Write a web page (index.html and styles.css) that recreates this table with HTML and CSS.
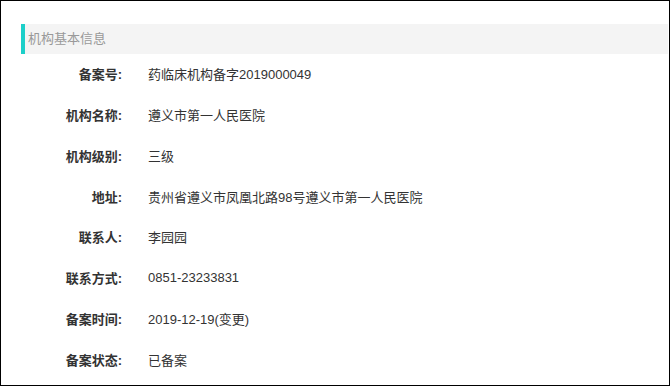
FILE: index.html
```html
<!DOCTYPE html>
<html lang="zh-CN">
<head>
<meta charset="utf-8">
<title>机构基本信息</title>
<link rel="stylesheet" href="styles.css">
</head>
<body>
<div class="frame">
  <div class="panel">
    <div class="title">机构基本信息</div>
    <div class="rows">
      <div class="row"><span class="label">备案号:</span><span class="value">药临床机构备字2019000049</span></div>
      <div class="row"><span class="label">机构名称:</span><span class="value">遵义市第一人民医院</span></div>
      <div class="row"><span class="label">机构级别:</span><span class="value">三级</span></div>
      <div class="row"><span class="label">地址:</span><span class="value">贵州省遵义市凤凰北路98号遵义市第一人民医院</span></div>
      <div class="row"><span class="label">联系人:</span><span class="value">李园园</span></div>
      <div class="row"><span class="label">联系方式:</span><span class="value">0851-23233831</span></div>
      <div class="row"><span class="label">备案时间:</span><span class="value">2019-12-19(变更)</span></div>
      <div class="row"><span class="label">备案状态:</span><span class="value">已备案</span></div>
    </div>
  </div>
</div>
</body>
</html>
```
FILE: styles.css
```css
* { box-sizing: border-box; }
html, body { margin: 0; padding: 0; background: #fff; }
body {
  font-family: "Liberation Sans", "Noto Sans CJK SC", sans-serif;
  font-size: 13px;
  color: #333;
}
.frame {
  width: 670px;
  height: 386px;
  border: 1px solid #000;
  padding: 23px 1px 0 20px;
  overflow: hidden;
}
.title {
  height: 30px;
  line-height: 30px;
  background: #f4f4f4;
  border-left: 4px solid #1ccfc9;
  padding-left: 3px;
  color: #999;
}
.rows {
  display: flex;
  flex-direction: column;
  margin-top: -0.6px;
}
.row {
  display: flex;
  height: 40.75px;
  align-items: center;
}
.label {
  width: 101px;
  text-align: right;
  font-weight: bold;
  color: #333;
}
.value {
  margin-left: 26px;
  color: #333;
}
```
